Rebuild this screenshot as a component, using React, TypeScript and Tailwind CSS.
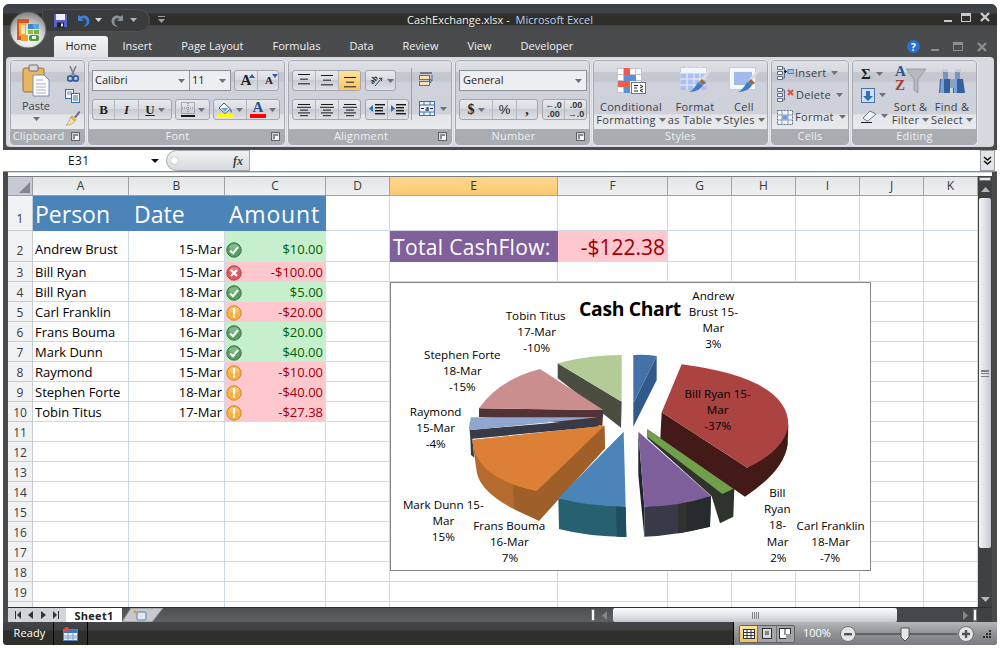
import type { ReactNode } from "react";

const colWidths = [96, 96, 101, 64, 168, 110, 64, 64, 64, 64, 54];
const colNames = ["A", "B", "C", "D", "E", "F", "G", "H", "I", "J", "K"];

type Status = "ok" | "bad" | "warn";

const rows: { name: string; date: string; amount: string; status: Status }[] = [
  { name: "Andrew Brust", date: "15-Mar", amount: "$10.00", status: "ok" },
  { name: "Bill Ryan", date: "15-Mar", amount: "-$100.00", status: "bad" },
  { name: "Bill Ryan", date: "18-Mar", amount: "$5.00", status: "ok" },
  { name: "Carl Franklin", date: "18-Mar", amount: "-$20.00", status: "warn" },
  { name: "Frans Bouma", date: "16-Mar", amount: "$20.00", status: "ok" },
  { name: "Mark Dunn", date: "15-Mar", amount: "$40.00", status: "ok" },
  { name: "Raymond", date: "15-Mar", amount: "-$10.00", status: "warn" },
  { name: "Stephen Forte", date: "18-Mar", amount: "-$40.00", status: "warn" },
  { name: "Tobin Titus", date: "17-Mar", amount: "-$27.38", status: "warn" },
];

const tabs = ["Insert", "Page Layout", "Formulas", "Data", "Review", "View", "Developer"];

const chartLabels: [string, number, number][] = [
  ["Andrew", 985, 75],
  ["Brust 15-", 985, 122],
  ["Mar", 985, 170],
  ["3%", 985, 220],
  ["Tobin Titus", 452, 134],
  ["17-Mar", 455, 182],
  ["-10%", 455, 230],
  ["Stephen Forte", 232, 252],
  ["18-Mar", 232, 300],
  ["-15%", 232, 348],
  ["Raymond", 152, 423],
  ["15-Mar", 152, 471],
  ["-4%", 152, 519],
  ["Mark Dunn 15-", 175, 702],
  ["Mar", 175, 750],
  ["15%", 175, 798],
  ["Frans Bouma", 373, 765],
  ["16-Mar", 373, 813],
  ["7%", 375, 861],
  ["Bill Ryan 15-", 998, 369],
  ["Mar", 998, 417],
  ["-37%", 998, 465],
  ["Bill", 1177, 665],
  ["Ryan", 1177, 713],
  ["18-", 1178, 761],
  ["Mar", 1178, 813],
  ["2%", 1180, 861],
  ["Carl Franklin", 1337, 765],
  ["18-Mar", 1337, 813],
  ["-7%", 1335, 861],
];

function Caret({ className = "" }: { className?: string }) {
  return (
    <svg width="7" height="4" viewBox="0 0 7 4" className={`shrink-0 ${className}`}>
      <path d="M0 0h7L3.5 4z" fill="#6d7078" />
    </svg>
  );
}

function OfficeButton() {
  return (
    <svg width="38" height="38" viewBox="0 0 38 38" className="absolute left-[6px] top-[7px] z-10">
      <defs>
        <radialGradient id="orb" cx="50%" cy="75%" r="70%">
          <stop offset="0" stopColor="#ffffff" />
          <stop offset="0.55" stopColor="#d8d8d6" />
          <stop offset="1" stopColor="#8b8b88" />
        </radialGradient>
      </defs>
      <circle cx="19" cy="19" r="18" fill="url(#orb)" stroke="#5c5c5c" />
      <path d="M8 8h12v4h-8v13h6v4H8z" fill="#d9541e" />
      <path d="M10 12h7v13h-7z" fill="#f6b13a" />
      <rect x="12" y="14" width="4" height="9" fill="#fbe3ae" />
      <rect x="19" y="13" width="5" height="5" fill="#3a86c8" />
      <rect x="24" y="13" width="6" height="5" fill="#59a5dd" />
      <rect x="19" y="19" width="5" height="4" fill="#8bbf45" />
      <rect x="25" y="19" width="5" height="4" fill="#7cae3c" />
      <rect x="20" y="24" width="10" height="6" fill="#4f9a38" rx="2" />
      <rect x="12" y="24" width="7" height="6" fill="#f2a32b" />
      <rect x="23" y="25" width="4" height="3" fill="#e8f3da" />
    </svg>
  );
}

function FloppyIcon() {
  return (
    <svg width="15" height="15" viewBox="0 0 15 15">
      <rect x="0.5" y="0.5" width="14" height="14" rx="1" fill="#5b62c9" stroke="#2c2f80" />
      <rect x="3" y="1" width="9" height="6" fill="#eef0fb" />
      <rect x="4" y="9.5" width="7" height="5" fill="#22222e" />
      <rect x="8" y="10.5" width="2" height="3" fill="#e5e5e5" />
    </svg>
  );
}

function UndoIcon({ color, flip }: { color: string; flip?: boolean }) {
  return (
    <svg width="14" height="15" viewBox="0 0 14 15" className={flip ? "-scale-x-100" : ""}>
      <path d="M2 2v6h6L5.6 5.7C8 4.6 11 6 10.6 9.5 10.4 11.5 8.8 13 7 13.6 10.5 14 13.4 11.5 13.4 8 13.4 3.4 8.5 1.2 4.5 3.6z" fill={color} />
    </svg>
  );
}

function WinControls({ dim }: { dim?: boolean }) {
  const c = dim ? "#8b8d90" : "#c8cacc";
  return (
    <>
      <span className="mt-[7px] h-[2px] w-[8px]" style={{ background: c }} />
      <span className="h-[9px] w-[10px] border border-t-[3px]" style={{ borderColor: c }} />
      <svg width="10" height="10" viewBox="0 0 10 10">
        <path d="M1 1l8 8M9 1l-8 8" stroke={c} strokeWidth="2.4" />
      </svg>
    </>
  );
}

function RibbonBox({ children, className = "" }: { children: ReactNode; className?: string }) {
  return (
    <div className={`flex h-[21px] items-center rounded-[3px] border border-[#a3a6ad] bg-[linear-gradient(180deg,#e9eaee_0%,#dadce2_45%,#c9ccd4_50%,#dfe1e6_100%)] ${className}`}>
      {children}
    </div>
  );
}

function RibbonCell({ children, className = "", caret }: { children?: ReactNode; className?: string; caret?: boolean }) {
  return (
    <div className={`flex h-full items-center justify-center gap-[3px] border-r border-[#b4b7be] last:border-r-0 ${className}`}>
      {children}
      {caret && <Caret />}
    </div>
  );
}

function Launcher() {
  return (
    <svg width="9" height="9" viewBox="0 0 9 9" className="absolute right-[4px] top-[3px]">
      <rect x="0.5" y="0.5" width="8" height="8" fill="#d6d8dc" stroke="#5f6166" />
      <rect x="2" y="2" width="5" height="5" fill="#8a8c90" />
      <path d="M4 4h4v4H4z" fill="#f4f4f4" />
    </svg>
  );
}

function Group({ label, width, children, launcher }: { label: string; width: number; children: ReactNode; launcher?: boolean }) {
  return (
    <div className="flex h-[85px] shrink-0 flex-col overflow-hidden rounded-[4px] border border-[#a6a9b0] shadow-[0_0_0_1px_#e8e9ec]" style={{ width }}>
      <div className="relative min-h-0 flex-1 bg-[linear-gradient(180deg,#dfe1e6_0%,#d7d9df_16%,#c5c8d0_17%,#c4c7cf_30%,#cfd2da_31%,#ced1d9_78%,#e3e5e9_79%,#e9eaed_100%)]">
        {children}
      </div>
      <div className={`relative h-[15px] shrink-0 bg-[#a9acb1] text-center text-[11px] leading-[14px] tracking-[0.2px] text-[#eef0f2] ${launcher ? "pr-[18px]" : ""}`}>
        {label}
        {launcher && <Launcher />}
      </div>
    </div>
  );
}

function Lines({ rows }: { rows: number[] }) {
  const gap = 14 / rows.length;
  return (
    <svg width="14" height="14" viewBox="0 0 14 14">
      {rows.map((w, i) => (
        <rect key={i} x={(14 - w) / 2} y={1 + i * gap} width={w} height="1" fill="#1a1a1a" />
      ))}
    </svg>
  );
}

function PasteIcon() {
  return (
    <svg width="28" height="33" viewBox="0 0 28 33">
      <rect x="1" y="4" width="21" height="24" rx="2" fill="#e8b561" stroke="#9c7333" />
      <rect x="7" y="1" width="9" height="6" rx="1" fill="#d8d8d8" stroke="#6e6e6e" />
      <path d="M11 11h11l5 5v16H11z" fill="#fdfdff" stroke="#7c8fb1" />
      <path d="M14 16h7M14 20h10M14 23h10M14 26h10M14 29h10" stroke="#a4afc4" />
    </svg>
  );
}

function ScissorsIcon() {
  return (
    <svg width="12" height="16" viewBox="0 0 12 16">
      <path d="M3 0l4 9M9 0L5 9" stroke="#7a7f88" strokeWidth="1.6" />
      <circle cx="3.2" cy="12.5" r="2.6" fill="none" stroke="#2f5f9e" strokeWidth="1.8" />
      <circle cx="8.8" cy="12.5" r="2.6" fill="none" stroke="#2f5f9e" strokeWidth="1.8" />
    </svg>
  );
}

function CopyIcon() {
  return (
    <svg width="15" height="14" viewBox="0 0 15 14">
      <rect x="0.5" y="0.5" width="8" height="9" fill="#f4f8ff" stroke="#2f6db3" />
      <path d="M2 3h5M2 5h5" stroke="#5f92cc" />
      <rect x="6.5" y="4.5" width="8" height="9" fill="#fff" stroke="#2f6db3" />
      <path d="M8 7h5M8 9h5M8 11h5" stroke="#2f6db3" />
    </svg>
  );
}

function BrushIcon({ size = 16 }: { size?: number }) {
  return (
    <svg width={size} height={size} viewBox="0 0 16 16">
      <path d="M9 7l5-6 1.4 1.2L11 8z" fill="#5f6f92" />
      <path d="M7 5l5 5-2.5 1.5L5.5 7z" fill="#e2b44d" />
      <path d="M5.5 7l4 4.5C8 14 4 15.5 1 15c2-1 3.5-4 4.5-8z" fill="#f0e2b8" stroke="#a88d52" strokeWidth="0.6" />
    </svg>
  );
}

function AIcon({ size, up }: { size: number; up: boolean }) {
  return (
    <span className="relative flex h-full w-[22px] items-center justify-center">
      <span className="font-['Liberation_Serif',serif] font-bold leading-none text-[#202020]" style={{ fontSize: size }}>A</span>
      <svg width="6" height="4" viewBox="0 0 6 4" className="absolute right-[2px] top-[3px]">
        <path d={up ? "M0 4h6L3 0z" : "M0 0h6L3 4z"} fill="#2e5fa3" />
      </svg>
    </span>
  );
}

function BorderIcon() {
  return (
    <svg width="14" height="15" viewBox="0 0 14 15">
      <rect x="0.5" y="0.5" width="13" height="11" fill="none" stroke="#70747c" strokeDasharray="1 1" />
      <path d="M7 1v11M1 6h12" stroke="#70747c" strokeDasharray="1 1" />
      <rect x="0" y="13" width="14" height="2" fill="#1a1a1a" />
    </svg>
  );
}

function FillIcon() {
  return (
    <span className="flex flex-col items-center">
      <svg width="15" height="12" viewBox="0 0 15 12">
        <path d="M6 1l6.5 6L7 11.5 1 6z" fill="#fdfdff" stroke="#4d5563" />
        <path d="M12.5 7c1.5 1.5 2 3 1 3.5-1 .5-1.2-2-1-3.5z" fill="#2d7cc5" />
        <path d="M3 6h7.5L7 10z" fill="#6aa3d8" />
      </svg>
      <span className="h-[4px] w-[16px] bg-[#ffff00]" />
    </span>
  );
}

function ColorAIcon() {
  return (
    <span className="flex flex-col items-center">
      <span className="h-[13px] font-['Liberation_Serif',serif] text-[15px] font-bold leading-[13px] text-[#2b4f8d]">A</span>
      <span className="h-[4px] w-[16px] bg-[#ff0000]" />
    </span>
  );
}

function OrientIcon() {
  return (
    <svg width="16" height="15" viewBox="0 0 16 15">
      <text x="6" y="9" textAnchor="middle" transform="rotate(-45 6 7)" fontSize="8" fontWeight="700" fill="#222" fontFamily="Liberation Serif, serif">ab</text>
      <path d="M7 13L14 5M14 5l-3 .5M14 5l-.5 3" stroke="#3f4450" fill="none" />
    </svg>
  );
}

function WrapIcon() {
  return (
    <svg width="16" height="15" viewBox="0 0 16 15">
      <path d="M1 1h12" stroke="#2b2b2b" />
      <rect x="0.5" y="3.5" width="10" height="4" fill="#f9e0b4" stroke="#8a6b3c" />
      <rect x="0.5" y="9.5" width="10" height="4" fill="#f9e0b4" stroke="#8a6b3c" />
      <path d="M13 3v6h-3m0 0l2-2m-2 2l2 2" stroke="#2f6db3" fill="none" />
    </svg>
  );
}

function MergeIcon() {
  return (
    <svg width="16" height="15" viewBox="0 0 16 15">
      <rect x="0.5" y="0.5" width="15" height="14" fill="#eef3fb" stroke="#3a6fb0" />
      <path d="M5 1v3M11 1v3M5 11v3M11 11v3M1 4h14M1 11h14" stroke="#3a6fb0" />
      <text x="8" y="10" textAnchor="middle" fontSize="7.5" fontWeight="700" fill="#222" fontFamily="Liberation Serif, serif">a</text>
      <path d="M2 7.5h3M11 7.5h3" stroke="#222" />
    </svg>
  );
}

function IndentIcon({ out }: { out?: boolean }) {
  return (
    <svg width="16" height="13" viewBox="0 0 16 13">
      {[1, 4, 7, 10].map((y) => (
        <rect key={y} x="6" y={y} width={y === 1 || y === 10 ? 10 : 8} height="1.4" fill="#1a1a1a" />
      ))}
      <path d={out ? "M0 5.5L4 2v7z" : "M5 5.5L1 2v7z"} fill="#2f6db3" />
    </svg>
  );
}

function DecimalIcon({ more }: { more?: boolean }) {
  return (
    <span className="relative flex h-full w-[22px] flex-col items-center justify-center font-['Liberation_Sans',sans-serif] text-[9px] font-bold leading-[9px] text-[#333]">
      <span>{more ? "\u2190.0" : ".00"}</span>
      <span>{more ? ".00" : "\u2192.0"}</span>
    </span>
  );
}

function CondFormatIcon() {
  return (
    <svg width="29" height="26" viewBox="0 0 29 26">
      <rect x="0.5" y="0.5" width="24" height="24" fill="#fff" stroke="#bcc4d1" />
      <path d="M6.5 0v25M12.5 0v25M18.5 0v25M0 6.5h25M0 12.5h25M0 18.5h25" stroke="#bcc4d1" />
      <rect x="7" y="0" width="6" height="7" fill="#ef5b4c" />
      <rect x="7" y="7" width="12" height="6" fill="#5f8fd8" />
      <rect x="1" y="13" width="12" height="6" fill="#ef5b4c" />
      <rect x="7" y="19" width="6" height="6" fill="#5f8fd8" />
      <rect x="14.5" y="14.5" width="14" height="11" fill="#fdfdff" stroke="#6d7686" />
      <path d="M17 17.5h4M17 20h3M17 23h4M23 17l3 1.5-3 1.5M26 21l-3 1.5 3 1.5" stroke="#222" fill="none" />
    </svg>
  );
}

function TableBrushIcon({ single }: { single?: boolean }) {
  return (
    <svg width="31" height="27" viewBox="0 0 31 27">
      <rect x="0.5" y="0.5" width="26" height="22" fill="#f4f7fd" stroke="#c4ccdb" />
      {single ? (
        <rect x="5" y="5" width="18" height="13" fill="#a2bbef" />
      ) : (
        <>
          <rect x="1" y="6" width="25" height="17" fill="#a9c1ef" />
          <path d="M7 0v23M14 0v23M20 0v23M0 6h26M0 12h26M0 18h26" stroke="#eef2fa" />
        </>
      )}
      <path d="M30 3L20 15" stroke="#dcdcdc" strokeWidth="3" />
      <path d="M22 12l4 4-3 2-4-3z" fill="#9c6a3e" />
      <path d="M18 15l5 3c-2 4-7 7-14 7 4-2 7-6 9-10z" fill="#3f7cc7" />
    </svg>
  );
}

function InsertCellIcon({ del, fmt }: { del?: boolean; fmt?: boolean }) {
  if (fmt) {
    return (
      <svg width="16" height="16" viewBox="0 0 16 16">
        <rect x="0.5" y="1.5" width="15" height="14" fill="#f4f7fd" stroke="#5b6a82" strokeDasharray="2 1" />
        <path d="M5 2v13M11 2v13M1 6h14M1 11h14" stroke="#8b97ab" />
        <rect x="5.5" y="6.5" width="5" height="4" fill="#6a9be0" />
      </svg>
    );
  }
  return (
    <svg width="17" height="14" viewBox="0 0 17 14">
      <path d="M0.5 0.5h5v3h-5zM0.5 5.5h5v3h-5zM0.5 10.5h5v3h-5z" fill="#f1f4fa" stroke="#5e6c84" />
      <path d="M5.5 2h2v10h-2" stroke="#5e6c84" fill="none" />
      {del ? (
        <path d="M11 2l5 5M16 2l-5 5" stroke="#e64b30" strokeWidth="2" />
      ) : (
        <>
          <rect x="11" y="3.5" width="6" height="4" fill="#9cc0f0" stroke="#4f7fbf" />
          <path d="M7 5.5h3M8.5 4v3" stroke="#222" />
        </>
      )}
    </svg>
  );
}

function SortIcon() {
  return (
    <span className="relative block h-[27px] w-[31px]">
      <span className="absolute left-0 top-[-3px] font-['Liberation_Serif',serif] text-[15px] font-bold leading-[15px] text-[#31558f]">A</span>
      <span className="absolute left-0 top-[11px] font-['Liberation_Serif',serif] text-[15px] font-bold leading-[15px] text-[#a33a32]">Z</span>
      <svg width="20" height="26" viewBox="0 0 20 26" className="absolute left-[11px] top-[1px]">
        <path d="M0 1h20L12 11v14l-4-3V11z" fill="#b6babd" stroke="#7e8286" strokeWidth="0.6" />
      </svg>
    </span>
  );
}

function BinocularIcon() {
  return (
    <svg width="28" height="26" viewBox="0 0 28 26">
      <path d="M5 3h5v8H5zM17 3h5v8h-5z" fill="#7a94bf" />
      <path d="M2 11h10v14H1zM15 11h10l2 14H15z" fill="#35609e" />
      <path d="M3 11h3v14H2zM16 11h3v14h-3z" fill="#7da2d3" />
      <path d="M12 11h4v9h-4z" fill="#8da0bd" />
      <path d="M4 1h6v3H4zM17 1h6v3h-6z" fill="#c3cde0" />
    </svg>
  );
}

function EraserIcon() {
  return (
    <svg width="17" height="13" viewBox="0 0 17 13">
      <path d="M6 11l-4-3 7-7 6 3-8 7z" fill="#eef1f6" stroke="#6f7787" />
      <path d="M0 12.5h11" stroke="#222" />
    </svg>
  );
}

function FillDownIcon() {
  return (
    <svg width="14" height="15" viewBox="0 0 14 15">
      <rect x="0.5" y="0.5" width="13" height="14" fill="#cfe0f6" stroke="#4472ac" />
      <path d="M5 3h4v5h3l-5 5-5-5h3z" fill="#2e6fc2" />
    </svg>
  );
}

function SmallCommand({ icon, label, gap = 1 }: { icon: ReactNode; label: string; gap?: number }) {
  return (
    <div className="flex h-[22px] items-center pl-[5px] text-[11px] tracking-[0.3px] text-[#3b3f47]">
      {icon}
      <span style={{ marginLeft: gap }}>{label}</span>
      <Caret className="ml-[5px]" />
    </div>
  );
}

function BigCommand({ icon, top, bottom, width }: { icon: ReactNode; top: string; bottom: string; width: number }) {
  return (
    <div className="flex shrink-0 flex-col items-center pt-[5px] text-[11px] leading-[13px] tracking-[0.3px] text-[#3b3f47]" style={{ width }}>
      <div className="flex h-[29px] items-center">{icon}</div>
      <span className="mt-[5px] whitespace-nowrap">{top}</span>
      <span className="flex items-center gap-[3px] whitespace-nowrap">
        {bottom}
        <Caret />
      </span>
    </div>
  );
}

function StatusIcon({ status }: { status: Status }) {
  const fill = status === "ok" ? "#55a05f" : status === "bad" ? "#e0565a" : "#f5b23f";
  const stroke = status === "ok" ? "#3c6e46" : status === "bad" ? "#a9464a" : "#c98a2c";
  return (
    <svg width="16" height="16" viewBox="0 0 16 16" className="shrink-0">
      <circle cx="8" cy="8" r="7.2" fill={fill} stroke={stroke} />
      <ellipse cx="8" cy="5" rx="5" ry="3" fill="#ffffff" opacity="0.25" />
      {status === "ok" && <path d="M4 8.5l3 2.6 5-6" fill="none" stroke="#fff" strokeWidth="2.2" />}
      {status === "bad" && <path d="M5 5l6 6M11 5l-6 6" fill="none" stroke="#fff" strokeWidth="2.2" />}
      {status === "warn" && (
        <>
          <rect x="7" y="3" width="2" height="6.5" fill="#fff" />
          <rect x="7" y="10.5" width="2" height="2" fill="#fff" />
        </>
      )}
    </svg>
  );
}

function PieChart() {
  return (
    <svg viewBox="18 24 1437 861" className="block h-full w-full" fontFamily="Open Sans, sans-serif">
      {/* back slices first */}
      <path d="M518 265L710 380L708 458L518 310z" fill="#4b4d41" />
      <path d="M518 265Q610 240 710 240V380z" fill="#b3cb95" />
      <path d="M815 243V315L745 455V385z" fill="#2f5a8a" />
      <path d="M745 240Q780 238 815 243L745 385z" fill="#4472a8" />

      <path d="M282 400L655 405L652 452L282 426z" fill="#513335" />
      <path d="M465 282L655 405L282 400Q340 315 465 282z" fill="#cb8e8f" />
      <path d="M254 465L640 432V455L256 492z" fill="#383b47" />
      <path d="M256 490L258 540L268 548L262 490z" fill="#383b47" />
      <path d="M640 427L258 427Q252 445 252 466z" fill="#8fa6cf" />

      <path d="M262 495L658 452L660 520L462 737L388 703Q285 650 275 590z" fill="#b56b2e" />
      <path d="M658 452L660 520L462 737L388 703L384 625L455 648z" fill="#9e5f28" />
      <path d="M658 452L455 648Q270 610 262 495z" fill="#dc8037" />

      <path d="M520 670L722 695L724 786Q610 785 522 762z" fill="#27606f" />
      <path d="M693 692L722 695L724 786L695 785z" fill="#1f4f5e" />
      <path d="M716 470L722 695Q610 695 520 670z" fill="#4a84b8" />

      <path d="M760 470L778 695L778 785L760 600z" fill="#20242a" />
      <path d="M778 695L978 663L975 755Q880 780 778 785z" fill="#383a47" />
      <path d="M880 688L978 663L975 755L880 775z" fill="#262b2e" />
      <path d="M880 688L905 684V770L880 775z" fill="#30322e" />
      <path d="M760 470L978 663Q880 695 778 695z" fill="#7f5f9b" />

      <path d="M787 463V490L980 664L1005 745L1045 725L1048 640z" fill="#2e332c" />
      <path d="M787 463L1048 640L1012 657L787 485z" fill="#729f4b" />

      <path d="M830 412L826 490L1080 665Q1195 590 1208 510L1210 450L1087 578z" fill="#431a17" />
      <path d="M890 268Q1210 310 1210 450Q1200 525 1087 578L830 412z" fill="#ab4341" />

      <text x="735" y="122" textAnchor="middle" fontSize="58" fontWeight="700" fill="#000" letterSpacing="-1">Cash Chart</text>
      {chartLabels.map(([text, x, y], i) => (
        <text key={i} x={x} y={y} textAnchor="middle" fontSize="35" fill="#000">{text}</text>
      ))}
    </svg>
  );
}

function RowHeader({ n, height }: { n: number; height: number }) {
  return (
    <div className={`flex w-[25px] shrink-0 items-end justify-center border-b border-r border-[#c9cdd3] bg-[#f1f2f4] text-[12px] leading-[17px] text-[#3a3a3a] ${n === 1 ? "pb-[3px]" : n === 2 ? "pb-[2px]" : ""}`} style={{ height }}>
      {height > 10 ? n : null}
    </div>
  );
}

const cellBase = "flex shrink-0 items-end overflow-hidden whitespace-nowrap border-b border-r border-[#d0d7e5] text-[13px] leading-[17px] text-black";

function GridRow({ n, height, cells }: { n: number; height: number; cells?: Record<number, ReactNode> }) {
  return (
    <div className="flex">
      <RowHeader n={n} height={height} />
      {colWidths.map((w, i) =>
        cells?.[i] ? (
          <div key={i} style={{ width: w, height }} className="shrink-0">
            {cells[i]}
          </div>
        ) : (
          <div key={i} className={cellBase} style={{ width: w, height }} />
        ),
      )}
    </div>
  );
}

function dataCells(r: (typeof rows)[number], raised?: boolean): Record<number, ReactNode> {
  const good = r.status === "ok";
  const lift = raised ? "pb-[3px]" : "";
  return {
    0: <div className={`${cellBase} h-full pl-[2px] ${lift}`}>{r.name}</div>,
    1: <div className={`${cellBase} h-full justify-end pr-[2px] ${lift}`}>{r.date}</div>,
    2: (
      <div className={`flex h-full items-end justify-between whitespace-nowrap pl-[1px] pr-[3px] text-[13px] leading-[17px] ${lift} ${good ? "bg-[#c6efce] text-[#006100]" : "bg-[#ffc7ce] text-[#9c0006]"}`}>
        <span className="mb-[1px]">
          <StatusIcon status={r.status} />
        </span>
        <span className="pb-[1px]">{r.amount}</span>
      </div>
    ),
  };
}

function Sheet() {
  return (
    <div className="relative min-w-0 flex-1 overflow-hidden bg-white">
      {/* column headers */}
      <div className="flex h-[20px] border-t border-[#7a7c80]">
        <div className="flex w-[25px] shrink-0 items-end justify-end border-b border-r border-[#9a9da3] bg-[#c6cad2] p-[2px]">
          <svg width="11" height="11" viewBox="0 0 11 11">
            <path d="M11 0v11H0z" fill="#83868c" />
          </svg>
        </div>
        {colNames.map((c, i) => (
          <div
            key={c}
            className={`flex shrink-0 items-center justify-center border-r text-[12px] ${
              c === "E"
                ? "border-b border-b-[#f29536] border-r-[#f29536] bg-[linear-gradient(180deg,#fbd692_0%,#fdd27f_50%,#fcc871_100%)] text-[#333]"
                : "border-b border-b-[#9a9da3] border-r-[#a0a3a8] bg-[linear-gradient(180deg,#e4e5e7_0%,#eff0f1_100%)] text-[#3a3a3a]"
            }`}
            style={{ width: colWidths[i] }}
          >
            {c}
          </div>
        ))}
      </div>

      <GridRow
        n={1}
        height={35}
        cells={{
          0: <div className="flex h-full items-end bg-[#4a84b8] pb-[1px] pl-[2px] text-[23px] leading-[32px] text-white">Person</div>,
          1: <div className="flex h-full items-end bg-[#4a84b8] pb-[1px] pl-[5px] text-[23px] leading-[32px] text-white">Date</div>,
          2: <div className="flex h-full items-end bg-[#4a84b8] pb-[1px] pl-[4px] text-[23px] leading-[32px] tracking-[0.8px] text-white">Amount</div>,
        }}
      />
      <GridRow
        n={2}
        height={31}
        cells={{
          ...dataCells(rows[0], true),
          4: <div className="flex h-full items-end whitespace-nowrap bg-[#7f609a] pl-[3px] text-[21px] leading-[30px] tracking-[0.35px] text-white">Total CashFlow:</div>,
          5: <div className="flex h-full items-end justify-end whitespace-nowrap bg-[#ffc7ce] pr-[3px] text-[21px] leading-[30px] text-[#9c0006]">-$122.38</div>,
        }}
      />
      {rows.slice(1).map((r, i) => (
        <GridRow key={i} n={i + 3} height={20} cells={dataCells(r)} />
      ))}
      {Array.from({ length: 9 }).map((_, i) => (
        <GridRow key={i} n={i + 11} height={20} />
      ))}
      <GridRow n={20} height={6} />

      {/* chart floats over the grid */}
      <div className="absolute left-[382px] top-[106px] h-[289px] w-[481px] border border-[#868686] bg-white">
        <PieChart />
      </div>
    </div>
  );
}

function VScrollbar() {
  return (
    <div className="flex w-[14px] shrink-0 flex-col items-center bg-[#3f4143]">
      <div className="mt-[1px] h-[4px] w-[12px] border border-[#777] bg-[#e8e8e8]" />
      <div className="flex h-[17px] w-full items-center justify-center">
        <svg width="9" height="5" viewBox="0 0 9 5">
          <path d="M0 5h9L4.5 0z" fill="#b4b6b9" />
        </svg>
      </div>
      <div className="flex h-[350px] w-[12px] items-center justify-center rounded-[2px] bg-[linear-gradient(90deg,#f2f3f5_0%,#e7e9ee_30%,#c5c8d0_100%)]">
        <div className="h-[7px] w-[8px] border-y border-[#7d8087] bg-[linear-gradient(180deg,#7d8087_0,#7d8087_1px,transparent_1px,transparent_2px,#7d8087_2px,#7d8087_3px,transparent_3px)]" />
      </div>
      <div className="flex-1" />
      <svg width="9" height="5" viewBox="0 0 9 5" className="mb-[5px]">
        <path d="M0 0h9L4.5 5z" fill="#b4b6b9" />
      </svg>
    </div>
  );
}

function TabBar() {
  return (
    <div className="flex h-[15px] shrink-0 items-stretch border-t border-[#2d2d2d] bg-[linear-gradient(180deg,#4f5052_0%,#5f6062_100%)]">
      <div className="flex w-[58px] shrink-0 items-center justify-around bg-[#d2d4d8] px-[3px]">
        <svg width="6" height="8" viewBox="0 0 6 8"><path d="M0 0h1v8H0zM6 0v8L2 4z" fill="#333" /></svg>
        <svg width="5" height="8" viewBox="0 0 5 8"><path d="M5 0v8L0 4z" fill="#333" /></svg>
        <svg width="5" height="8" viewBox="0 0 5 8"><path d="M0 0v8l5-4z" fill="#333" /></svg>
        <svg width="6" height="8" viewBox="0 0 6 8"><path d="M5 0h1v8H5zM0 0v8l4-4z" fill="#333" /></svg>
      </div>
      <div className="flex w-[56px] shrink-0 items-center justify-center bg-white text-[11px] font-bold leading-none tracking-[0.3px] text-[#222]">
        Sheet1
      </div>
      <svg width="41" height="14" viewBox="0 0 41 14" className="shrink-0">
        <path d="M0 14L9 0H41L30 14z" fill="#c7c9ce" stroke="#8f9298" />
        <rect x="15" y="4" width="9" height="8" rx="1" fill="#dfe6f2" stroke="#5f7fa8" />
        <path d="M13 1l1 2 2 .5-2 1-1 2-1-2-2-1 2-.5z" fill="#f0a030" />
      </svg>
      <div className="min-w-0 flex-1" />
      <div className="my-[1px] w-[4px] shrink-0 border border-[#777] bg-white" />
      <div className="flex h-full w-[18px] shrink-0 items-center justify-center">
        <svg width="5" height="9" viewBox="0 0 5 9"><path d="M5 0v9L0 4.5z" fill="#85878a" /></svg>
      </div>
      <div className="flex w-[284px] shrink-0 items-center justify-center rounded-[2px] bg-[linear-gradient(180deg,#fafbfc_0%,#e8e9ed_45%,#c6c8ce_100%)]">
        <span className="h-[7px] w-[7px] bg-[linear-gradient(90deg,#7d8087_1px,transparent_1px)] bg-[length:2px_2px]" />
      </div>
      <div className="w-[61px] shrink-0 bg-[#45474a]" />
      <div className="flex h-full w-[15px] shrink-0 items-center justify-center bg-[#45474a]">
        <svg width="5" height="9" viewBox="0 0 5 9"><path d="M0 0v9l5-4.5z" fill="#85878a" /></svg>
      </div>
      <div className="my-[1px] w-[4px] shrink-0 border border-[#777] bg-white" />
      <div className="w-[15px] shrink-0 bg-[#3f4143]" />
    </div>
  );
}

function StatusBar() {
  return (
    <div className="flex h-[23px] shrink-0 items-stretch rounded-b-[4px] bg-[linear-gradient(180deg,#43454a_0%,#3c3e41_35%,#2f2f2b_40%,#2f2f2b_100%)] text-[11px] text-white">
      <div className="flex w-[51px] shrink-0 items-center justify-center border-r border-black pl-[3px] tracking-[0.1px]">Ready</div>
      <div className="flex w-[34px] shrink-0 items-center justify-center border-r border-black">
        <svg width="15" height="14" viewBox="0 0 15 14">
          <rect x="0.5" y="2.5" width="14" height="11" fill="#eef2f9" stroke="#5b83bd" />
          <rect x="1" y="3" width="13" height="3" fill="#3f76c4" />
          <path d="M5 6v7M10 6v7M1 9h13M1 11h13" stroke="#7c9cca" />
          <circle cx="3.5" cy="2.5" r="2.5" fill="#e24a3a" />
        </svg>
      </div>
      <div className="min-w-0 flex-1" />
      <div className="flex w-[264px] shrink-0 items-center rounded-br-[4px] border-l border-black bg-[linear-gradient(180deg,#b5b7bb_0%,#909296_50%,#7a7c80_100%)] pl-[5px]">
        <div className="flex h-[18px] w-[56px] shrink-0 items-stretch rounded-[2px] border border-[#5e6064] bg-[#a3a5a9]">
          <div className="flex flex-1 items-center justify-center bg-[linear-gradient(180deg,#fde29b_0%,#fbc15c_100%)]">
            <svg width="12" height="10" viewBox="0 0 12 10">
              <rect x="0.5" y="0.5" width="11" height="9" fill="#fff" stroke="#333" />
              <path d="M4 0v10M8 0v10M0 3.5h12M0 6.5h12" stroke="#333" />
            </svg>
          </div>
          <div className="flex flex-1 items-center justify-center border-x border-[#6f7175]">
            <svg width="10" height="11" viewBox="0 0 10 11"><rect x="0.5" y="0.5" width="9" height="10" fill="#d8d9dc" stroke="#333" /><path d="M3 4h4M3 6h4" stroke="#333" /></svg>
          </div>
          <div className="flex flex-1 items-center justify-center">
            <svg width="12" height="11" viewBox="0 0 12 11"><rect x="0.5" y="0.5" width="11" height="10" fill="#fff" stroke="#333" /><path d="M6 0v7" stroke="#333" /><rect x="7" y="6" width="5" height="5" fill="#9a9ca0" /></svg>
          </div>
        </div>
        <span className="ml-[8px] w-[32px] shrink-0 text-[11px]">100%</span>
        <svg width="120" height="18" viewBox="0 0 120 18" className="ml-[4px] shrink-0">
          <path d="M16 9h102" stroke="#333" />
          <circle cx="9" cy="9" r="7.5" fill="#e4e5e7" stroke="#707275" />
          <rect x="5" y="8" width="8" height="2.4" fill="#555" />
          <path d="M62 3h8v9l-4 4-4-4z" fill="#e6e7e9" stroke="#555" />
        </svg>
        <svg width="16" height="16" viewBox="0 0 16 16" className="-ml-[1px] shrink-0">
          <circle cx="8" cy="8" r="7.5" fill="#e4e5e7" stroke="#707275" />
          <path d="M4 8h8M8 4v8" stroke="#555" strokeWidth="2.4" />
        </svg>
        <svg width="10" height="10" viewBox="0 0 10 10" className="ml-[7px] shrink-0">
          <path d="M8 1h2v2H8zM5 4h2v2H5zM8 4h2v2H8zM2 7h2v2H2zM5 7h2v2H5zM8 7h2v2H8z" fill="#2d2d2d" />
        </svg>
      </div>
    </div>
  );
}

export default function App() {
  return (
    <div className="h-[648px] w-[1001px] overflow-hidden bg-white font-['Open_Sans',sans-serif]">
      <div className="relative ml-[3px] mt-[4px] flex h-[641px] w-[994px] flex-col rounded-t-[6px] rounded-b-[4px] bg-[#4a4b4d]">
        <OfficeButton />

        {/* title bar */}
        <div className="grid h-[30px] shrink-0 grid-cols-[1fr_auto_1fr] items-center rounded-t-[6px] bg-[linear-gradient(180deg,#3c3f44_0%,#41444a_30%,#302e2a_33%,#2f2d29_70%,#45464a_72%,#4a4b4d_100%)] pt-[2px]">
          <div className="flex items-center pl-[39px]">
            <div className="flex h-[23px] w-[108px] items-center rounded-r-[12px] bg-[#3a3b3c] pl-[11px] shadow-[inset_0_0_0_1px_#4c4d4f]">
              <FloppyIcon />
              <span className="ml-[8px]"><UndoIcon color="#3c83d6" /></span>
              <Caret className="ml-[5px] [&>path]:fill-[#d6d6d6]" />
              <span className="ml-[9px]"><UndoIcon color="#8a9298" flip /></span>
              <Caret className="ml-[5px] [&>path]:fill-[#b5b5b5]" />
            </div>
            <svg width="7" height="8" viewBox="0 0 7 8" className="ml-[8px]">
              <path d="M0 0h7v1H0zM0 3h7L3.5 7z" fill="#9a9c9f" />
            </svg>
          </div>
          <div className="text-[11px] text-[#eceff2]">
            CashExchange.xlsx -&nbsp; <span className="text-[#b7d3f2]">Microsoft Excel</span>
          </div>
          <div className="-mt-[6px] flex items-center justify-end gap-[9px] pr-[7px]">
            <WinControls />
          </div>
        </div>

        {/* tabs */}
        <div className="flex h-[23px] shrink-0 items-stretch pl-[51px] pt-[2px] text-[11px] text-[#eef0f2]">
          <div className="flex w-[54px] items-center justify-center rounded-t-[3px] bg-[linear-gradient(180deg,#f4f5f7_0%,#dfe1e6_100%)] text-[#20242a]">
            Home
          </div>
          {tabs.map((t) => (
            <div key={t} className="flex items-center px-[14.5px]">{t}</div>
          ))}
          <div className="flex flex-1 items-center justify-end gap-[14px] pr-[10px]">
            <span className="-mr-[3px] flex h-[13px] w-[13px] items-center justify-center rounded-full bg-[#2a6fd8] text-[10px] font-bold leading-none text-white">?</span>
            <WinControls dim />
          </div>
        </div>

        {/* ribbon */}
        <div className="mx-[3px] flex h-[90px] shrink-0 items-start gap-[3px] rounded-[4px] bg-[#d7d9df] pl-[4px] pt-[3px] text-[#1f1f1f]">
          <Group label="Clipboard" width={75} launcher>
            <div className="flex h-full">
              <div className="flex w-[50px] flex-col items-center pt-[3px] text-[11px] text-[#3b3f47]">
                <PasteIcon />
                <span className="mt-[2px] leading-[14px]">Paste</span>
                <Caret className="mt-[4px]" />
              </div>
              <div className="flex flex-1 flex-col items-center gap-[7px] pt-[5px]">
                <ScissorsIcon />
                <CopyIcon />
                <BrushIcon />
              </div>
            </div>
          </Group>

          <Group label="Font" width={197} launcher>
            <div className="flex flex-col gap-[8px] pl-[3px] pt-[9px]">
              <div className="flex items-center gap-[3px]">
                <div className="flex h-[21px] w-[139px] items-stretch border border-[#8f9298] bg-[#eceef1] text-[11px]">
                  <div className="flex w-[97px] items-center justify-between border-r border-[#8f9298] pl-[2px] pr-[4px]">Calibri<Caret /></div>
                  <div className="flex flex-1 items-center justify-between pl-[2px] pr-[4px]">11<Caret /></div>
                </div>
                <RibbonBox className="w-[45px]">
                  <RibbonCell className="w-[23px]"><AIcon size={15} up /></RibbonCell>
                  <RibbonCell className="flex-1"><AIcon size={11} up={false} /></RibbonCell>
                </RibbonBox>
              </div>
              <div className="flex items-center gap-[3px]">
                <RibbonBox className="w-[80px]">
                  <RibbonCell className="w-[22px] font-['Liberation_Serif',serif] text-[13px] font-bold">B</RibbonCell>
                  <RibbonCell className="w-[24px] font-['Liberation_Serif',serif] text-[13px] font-bold italic">I</RibbonCell>
                  <RibbonCell className="flex-1 font-['Liberation_Serif',serif] text-[13px] font-bold underline" caret>U</RibbonCell>
                </RibbonBox>
                <RibbonBox className="w-[35px] justify-center"><RibbonCell caret><BorderIcon /></RibbonCell></RibbonBox>
                <RibbonBox className="w-[67px]">
                  <RibbonCell className="w-[33px]" caret><FillIcon /></RibbonCell>
                  <RibbonCell className="flex-1" caret><ColorAIcon /></RibbonCell>
                </RibbonBox>
              </div>
            </div>
          </Group>

          <Group label="Alignment" width={164} launcher>
            <div className="flex pl-[3px] pt-[9px]">
              <div className="flex w-[119px] flex-col gap-[8px]">
                <div className="flex gap-[4px]">
                  <RibbonBox className="w-[69px]">
                    <RibbonCell className="w-[23px] items-start pt-[2px]"><Lines rows={[12, 8, 12]} /></RibbonCell>
                    <RibbonCell className="w-[23px]"><Lines rows={[12, 8, 12]} /></RibbonCell>
                    <RibbonCell className="flex-1 items-end rounded-r-[2px] bg-[linear-gradient(180deg,#fde39d_0%,#fbc660_100%)]"><Lines rows={[12, 8, 12]} /></RibbonCell>
                  </RibbonBox>
                  <RibbonBox className="w-[31px] justify-center"><RibbonCell caret><OrientIcon /></RibbonCell></RibbonBox>
                </div>
                <div className="flex gap-[4px]">
                  <RibbonBox className="w-[69px]">
                    <RibbonCell className="w-[23px]"><Lines rows={[12, 14, 8, 12, 8]} /></RibbonCell>
                    <RibbonCell className="w-[23px]"><Lines rows={[12, 14, 8, 12, 8]} /></RibbonCell>
                    <RibbonCell className="flex-1"><Lines rows={[12, 14, 8, 12, 8]} /></RibbonCell>
                  </RibbonBox>
                  <RibbonBox className="w-[44px]">
                    <RibbonCell className="w-[22px]"><IndentIcon out /></RibbonCell>
                    <RibbonCell className="flex-1"><IndentIcon /></RibbonCell>
                  </RibbonBox>
                </div>
              </div>
              <div className="my-[-2px] h-[52px] w-[1px] bg-[#9ea1a8]" />
              <div className="flex flex-col gap-[14px] pl-[7px] pt-[2px]">
                <WrapIcon />
                <span className="flex items-center gap-[5px]"><MergeIcon /><Caret /></span>
              </div>
            </div>
          </Group>

          <Group label="Number" width={135} launcher>
            <div className="flex flex-col gap-[8px] pl-[3px] pt-[9px]">
              <div className="flex h-[21px] w-[128px] items-center justify-between border border-[#8f9298] bg-[#eceef1] pl-[3px] pr-[4px] text-[11px]">
                General<Caret />
              </div>
              <div className="flex gap-[4px]">
                <RibbonBox className="w-[79px]">
                  <RibbonCell className="w-[33px] font-['Liberation_Serif',serif] text-[14px] font-bold" caret>$</RibbonCell>
                  <RibbonCell className="w-[24px] font-['Liberation_Sans',sans-serif] text-[13px]">%</RibbonCell>
                  <RibbonCell className="flex-1 font-['Liberation_Serif',serif] text-[14px] font-bold">,</RibbonCell>
                </RibbonBox>
                <RibbonBox className="w-[45px]">
                  <RibbonCell className="w-[22px]"><DecimalIcon more /></RibbonCell>
                  <RibbonCell className="flex-1"><DecimalIcon /></RibbonCell>
                </RibbonBox>
              </div>
            </div>
          </Group>

          <Group label="Styles" width={175}>
            <div className="flex">
              <BigCommand icon={<CondFormatIcon />} top="Conditional" bottom="Formatting" width={74} />
              <BigCommand icon={<TableBrushIcon />} top="Format" bottom="as Table" width={54} />
              <BigCommand icon={<TableBrushIcon single />} top="Cell" bottom="Styles" width={44} />
            </div>
          </Group>

          <Group label="Cells" width={78}>
            <div className="flex flex-col pt-[1px]">
              <SmallCommand icon={<InsertCellIcon />} label="Insert" gap={1} />
              <SmallCommand icon={<InsertCellIcon del />} label="Delete" gap={2} />
              <SmallCommand icon={<InsertCellIcon fmt />} label="Format" gap={2} />
            </div>
          </Group>

          <Group label="Editing" width={125}>
            <div className="flex">
              <div className="flex w-[37px] flex-col items-start gap-[5px] pl-[8px] pt-[5px]">
                <span className="flex h-[16px] items-center gap-[5px] font-['Liberation_Serif',serif] text-[15px] font-bold leading-none">Σ<Caret /></span>
                <span className="flex h-[16px] items-center gap-[4px]"><FillDownIcon /><Caret /></span>
                <span className="flex h-[16px] items-center gap-[3px]"><EraserIcon /><Caret /></span>
              </div>
              <BigCommand icon={<SortIcon />} top="Sort &" bottom="Filter" width={41} />
              <BigCommand icon={<BinocularIcon />} top="Find &" bottom="Select" width={42} />
            </div>
          </Group>
        </div>

        {/* formula bar */}
        <div className="mt-[3px] flex h-[22px] shrink-0 border-b border-[#8a8c90] bg-white pl-[5px] pr-[2px]">
          <div className="flex w-[155px] shrink-0 items-center pl-[60px] text-[12px] tracking-[0.3px] text-[#111]">
            <span>E31</span>
            <svg width="8" height="4" viewBox="0 0 8 4" className="ml-[62px]"><path d="M0 0h8L4 4z" fill="#111" /></svg>
          </div>
          <div className="ml-[3px] flex w-[84px] shrink-0 items-center justify-between rounded-l-[11px] border border-r border-[#a5a7ab] bg-[linear-gradient(180deg,#f0f1f3_0%,#d8dadd_100%)] pl-[4px] pr-[6px] font-['Liberation_Serif',serif] text-[12px] font-bold italic text-[#444]">
            <span className="h-[7px] w-[7px] rounded-full bg-[#fbfbfb] shadow-[0_0_1px_#777]" />
            fx
          </div>
          <div className="min-w-0 flex-1" />
          <div className="flex w-[15px] shrink-0 items-center justify-center border border-[#9a9ca0] bg-[#e3e4e7] text-[12px]">
            <svg width="9" height="10" viewBox="0 0 9 10"><path d="M1 1l3.5 3L8 1M1 5l3.5 3L8 5" fill="none" stroke="#111" strokeWidth="1.6" /></svg>
          </div>
        </div>
        <div className="mx-[5px] h-[4px] shrink-0 border-t border-[#d0d7e5] bg-white" />

        {/* worksheet */}
        <div className="mx-[5px] flex h-[431px] shrink-0 overflow-hidden">
          <Sheet />
          <VScrollbar />
        </div>
        <div className="mx-[5px]">
          <TabBar />
        </div>
        <StatusBar />
      </div>
    </div>
  );
}
